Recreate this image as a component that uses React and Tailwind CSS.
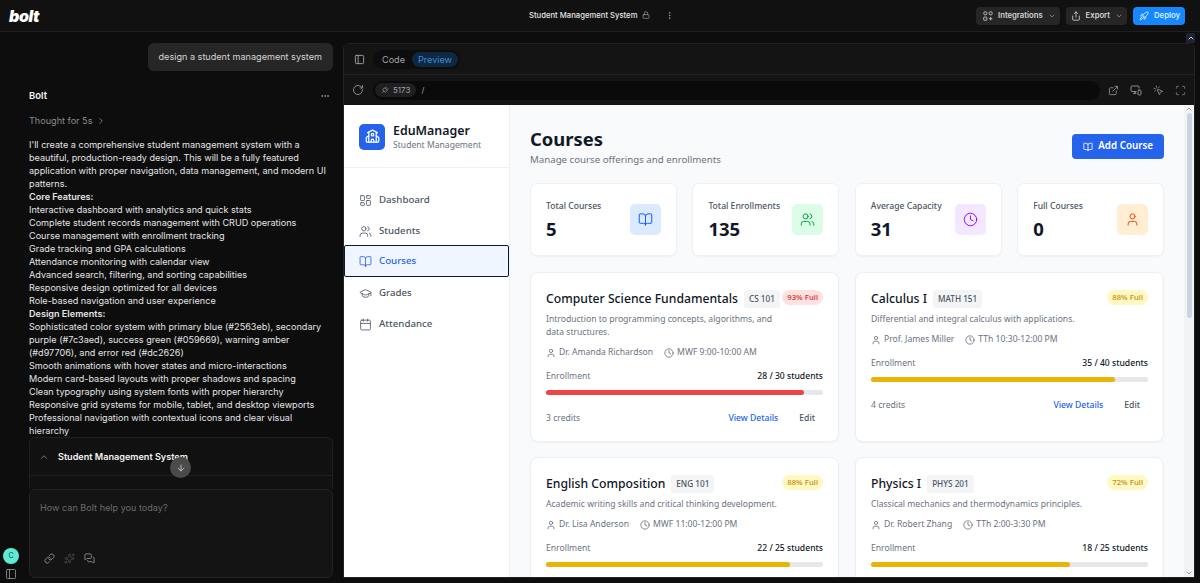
import {
  ArrowDown,
  BookOpen,
  Calendar,
  ChevronDown,
  ChevronRight,
  ChevronUp,
  Clock,
  Ellipsis,
  EllipsisVertical,
  ExternalLink,
  GraduationCap,
  LayoutDashboard,
  Link,
  Lock,
  MessagesSquare,
  MonitorSmartphone,
  MousePointerClick,
  PanelLeft,
  Plug,
  RotateCw,
  Rocket,
  Scan,
  School,
  Share,
  Sparkles,
  User,
  Users,
} from "lucide-react";

const chatLines = [
  "Interactive dashboard with analytics and quick stats",
  "Complete student records management with CRUD operations",
  "Course management with enrollment tracking",
  "Grade tracking and GPA calculations",
  "Attendance monitoring with calendar view",
  "Advanced search, filtering, and sorting capabilities",
  "Responsive design optimized for all devices",
  "Role-based navigation and user experience",
];

const designLines = [
  "Sophisticated color system with primary blue (#2563eb), secondary purple (#7c3aed), success green (#059669), warning amber (#d97706), and error red (#dc2626)",
  "Smooth animations with hover states and micro-interactions",
  "Modern card-based layouts with proper shadows and spacing",
  "Clean typography using system fonts with proper hierarchy",
  "Responsive grid systems for mobile, tablet, and desktop viewports",
  "Professional navigation with contextual icons and clear visual hierarchy",
];

const navItems = [
  { label: "Dashboard", icon: LayoutDashboard },
  { label: "Students", icon: Users },
  { label: "Courses", icon: BookOpen, active: true },
  { label: "Grades", icon: GraduationCap },
  { label: "Attendance", icon: Calendar },
];

const stats = [
  { label: "Total Courses", value: "5", icon: BookOpen, box: "bg-blue-100", tint: "text-blue-600" },
  { label: "Total Enrollments", value: "135", icon: Users, box: "bg-green-100", tint: "text-green-600" },
  { label: "Average Capacity", value: "31", icon: Clock, box: "bg-purple-100", tint: "text-purple-600" },
  { label: "Full Courses", value: "0", icon: User, box: "bg-orange-100", tint: "text-orange-600" },
];

const courses = [
  {
    title: "Computer Science Fundamentals",
    code: "CS 101",
    pct: 93,
    desc: "Introduction to programming concepts, algorithms, and data structures.",
    teacher: "Dr. Amanda Richardson",
    time: "MWF 9:00-10:00 AM",
    count: "28 / 30 students",
    credits: "3 credits",
  },
  {
    title: "Calculus I",
    code: "MATH 151",
    pct: 88,
    desc: "Differential and integral calculus with applications.",
    teacher: "Prof. James Miller",
    time: "TTh 10:30-12:00 PM",
    count: "35 / 40 students",
    credits: "4 credits",
  },
  {
    title: "English Composition",
    code: "ENG 101",
    pct: 88,
    desc: "Academic writing skills and critical thinking development.",
    teacher: "Dr. Lisa Anderson",
    time: "MWF 11:00-12:00 PM",
    count: "22 / 25 students",
    credits: "3 credits",
  },
  {
    title: "Physics I",
    code: "PHYS 201",
    pct: 72,
    desc: "Classical mechanics and thermodynamics principles.",
    teacher: "Dr. Robert Zhang",
    time: "TTh 2:00-3:30 PM",
    count: "18 / 25 students",
    credits: "4 credits",
  },
];

const IntegrationsIcon = () => (
  <svg width="10" height="10" viewBox="0 0 14 14" fill="none" stroke="currentColor" strokeWidth="1.2">
    <rect x="1" y="1" width="4.5" height="4.5" rx="2.25" />
    <rect x="8.5" y="1" width="4.5" height="4.5" rx="2.25" />
    <rect x="1" y="8.5" width="4.5" height="4.5" rx="1" />
    <path d="M10.75 8.5v4.5M8.5 10.75H13" />
  </svg>
);

const CourseCard = ({ course }) => {
  const red = course.pct > 90;
  return (
    <div className="h-[170px] rounded-[8px] border border-[#eceff3] bg-white px-[15px] pt-[16px] shadow-[0_1px_2px_rgba(0,0,0,0.04)]">
      <div className="flex items-start justify-between">
        <div className="flex items-center gap-[6px]">
          <h3 className="text-[12.2px] leading-[20px] font-medium whitespace-nowrap text-[#111827]">{course.title}</h3>
          <span className="rounded-[3px] bg-[#f3f4f6] px-[5px] text-[8.2px] leading-[18px] font-medium whitespace-nowrap text-[#4b5563]">
            {course.code}
          </span>
        </div>
        <span
          className={`mt-[1px] rounded-full px-[5px] text-[7.8px] leading-[15px] font-medium whitespace-nowrap ${
            red ? "bg-[#fee2e2] text-[#dc2626]" : "bg-[#fef9c3] text-[#ca8a04]"
          }`}
        >
          {course.pct}% Full
        </span>
      </div>
      <p className="mt-[4px] max-w-[235px] text-[8.6px] leading-[13px] text-[#6b7280]">{course.desc}</p>
      <div className="mt-[7px] flex items-center gap-[11px] text-[8.6px] leading-[13px] text-[#6b7280]">
        <span className="flex items-center gap-[3px]">
          <User size={10} />
          {course.teacher}
        </span>
        <span className="flex items-center gap-[3px]">
          <Clock size={10} />
          {course.time}
        </span>
      </div>
      <div className="mt-[11px] flex justify-between text-[8.6px] leading-[13px]">
        <span className="text-[#6b7280]">Enrollment</span>
        <span className="font-medium text-[#111827]">{course.count}</span>
      </div>
      <div className="mt-[7px] h-[5px] rounded-full bg-[#e5e7eb]">
        <div
          className={`h-full rounded-full ${red ? "bg-[#ef4444]" : "bg-[#eab308]"}`}
          style={{ width: `${course.pct}%` }}
        />
      </div>
      <div className="mt-[17px] flex items-center justify-between text-[8.6px] leading-[13px]">
        <span className="text-[#6b7280]">{course.credits}</span>
        <div className="flex gap-[21px] pr-[8px] font-medium">
          <span className="text-[#2563eb]">View Details</span>
          <span className="text-[#4b5563]">Edit</span>
        </div>
      </div>
    </div>
  );
};

const ChatPanel = () => (
  <div className="flex w-[343px] shrink-0 overflow-hidden font-['Inter',sans-serif]">
    <div className="flex w-[29px] shrink-0 flex-col items-start justify-end gap-[4px] pb-[3px] pl-[3px]">
      <div className="flex size-4 items-center justify-center rounded-full bg-[#5eead4] text-[7px] text-[#134e4a]">C</div>
      <PanelLeft size={12} strokeWidth={1.5} className="ml-[2px] text-[#a1a1aa]" />
    </div>
    <div className="relative flex w-[304px] flex-col pb-[5px]">
      <div className="flex justify-end pt-[11px]">
        <div className="rounded-[6px] bg-[#262626] px-[11px] text-[9.1px] leading-[28px] text-[#d4d4d8]">
          design a student management system
        </div>
      </div>
      <div className="mt-[18px] flex items-center justify-between pr-[3px]">
        <span className="text-[9.5px] leading-[13px] font-semibold text-[#f4f4f5]">Bolt</span>
        <Ellipsis size={10} className="text-[#a1a1aa]" />
      </div>
      <div className="mt-[12px] flex items-center gap-[4px] text-[9.1px] leading-[13px] text-[#8b8b8b]">
        Thought for 5s <ChevronRight size={10} />
      </div>
      <div className="mt-[11px] pr-[5px] text-[9.1px] leading-[13px] text-[#e4e4e7]">
        <p>
          I'll create a comprehensive student management system with a beautiful, production-ready design. This will be a fully featured application with proper navigation, data management, and modern UI patterns.
        </p>
        <p className="font-semibold">Core Features:</p>
        {chatLines.map((line) => (
          <p key={line}>{line}</p>
        ))}
        <p className="font-semibold">Design Elements:</p>
        {designLines.map((line) => (
          <p key={line}>{line}</p>
        ))}
      </div>
      <div className="min-h-0 flex-1 rounded-t-[6px] border border-b-0 border-[#1f1f1f] bg-[#111111]">
        <div className="flex h-[38px] items-center gap-[9px] border-b border-[#1f1f1f] px-[9px] text-[9.1px] font-semibold text-[#f4f4f5]">
          <ChevronUp size={10} className="text-[#8b8b8b]" />
          Student Management System
        </div>
      </div>
      <div className="absolute top-[425px] left-[141px] flex size-[21px] items-center justify-center rounded-full bg-[#4b4b4b]">
        <ArrowDown size={10} className="text-[#d4d4d8]" />
      </div>
      <div className="flex h-[89px] shrink-0 flex-col justify-between rounded-[6px] border border-[#222222] bg-[#141414] px-[10px] pt-[11px] pb-[13px]">
        <span className="text-[9.1px] leading-[13px] text-[#6b6b6b]">How can Bolt help you today?</span>
        <div className="flex items-center gap-[9px] pl-[4px] text-[#8b8b8b]">
          <Link size={11} />
          <Sparkles size={11} className="text-[#4b4b4b]" />
          <MessagesSquare size={11} />
        </div>
      </div>
    </div>
  </div>
);

const PreviewChrome = () => (
  <>
    <div className="flex h-[31px] items-center gap-[8px] border-b border-[#222222] bg-[#141414] px-[10px] text-[9.1px]">
      <PanelLeft size={11} className="text-[#a1a1aa]" />
      <div className="flex items-center rounded-full bg-[#0d0d0d] p-[2px]">
        <span className="px-[7px] leading-[15px] text-[#a1a1aa]">Code</span>
        <span className="rounded-full bg-[#0f2740] px-[6px] leading-[15px] text-[#3b8fd9]">Preview</span>
      </div>
    </div>
    <div className="flex h-[30px] items-center bg-[#141414] pr-[8px] pl-[8px] text-[#8b8b8b]">
      <RotateCw size={12} />
      <div className="mr-[8px] ml-[9px] flex h-[19px] flex-1 items-center gap-[5px] rounded-full bg-[#0a0a0a] text-[8px]">
        <span className="ml-[2px] flex items-center gap-[4px] rounded-full bg-[#1f1f1f] px-[6px] leading-[14px] text-[#a1a1aa]">
          <Plug size={8} className="rotate-45" />
          5173
        </span>
        <span className="text-[#a1a1aa]">/</span>
      </div>
      <div className="flex items-center gap-[11px]">
        <ExternalLink size={11} />
        <MonitorSmartphone size={12} />
        <MousePointerClick size={11} />
        <Scan size={11} />
      </div>
    </div>
  </>
);

const AppSidebar = () => (
  <aside className="w-[166px] shrink-0 border-r border-[#eceff3] bg-white">
    <div className="flex h-[63px] items-center gap-[8px] border-b border-[#f0f1f4] pt-[1px] pl-[15px]">
      <div className="flex size-[26px] items-center justify-center rounded-[5px] bg-[#2563eb] text-white">
        <School size={15} />
      </div>
      <div>
        <div className="text-[12.4px] leading-[17px] font-semibold text-[#111827]">EduManager</div>
        <div className="text-[8.6px] leading-[12px] text-[#6b7280]">Student Management</div>
      </div>
    </div>
    <nav className="pt-[16px] pb-[4px]">
      {navItems.map((item) => {
        const Icon = item.icon;
        return (
          <div
            key={item.label}
            className={`flex items-center gap-[7px] pt-[1px] text-[9.7px] font-medium ${
              item.active
                ? "-mt-[1px] h-[32px] rounded-[2px] border border-[#111827] bg-[#eff6ff] pl-[14px] text-[#2563eb]"
                : "h-[31px] pl-[15px] text-[#4b5563]"
            }`}
          >
            <Icon size={13} strokeWidth={1.5} />
            {item.label}
          </div>
        );
      })}
    </nav>
  </aside>
);

const CoursesPage = () => (
  <main className="min-w-0 flex-1 overflow-hidden bg-[#f9fafb] px-[20px] pt-[20px]">
    <div className="flex items-start justify-between">
      <div>
        <h1 className="text-[18.4px] leading-[28px] font-bold text-[#111827]">Courses</h1>
        <p className="text-[9.7px] leading-[14px] text-[#6b7280]">Manage course offerings and enrollments</p>
      </div>
      <button className="mt-[9px] flex h-[25px] items-center gap-[5px] rounded-[4px] bg-[#2563eb] px-[11px] text-[9.8px] font-semibold text-white">
        <BookOpen size={10} />
        Add Course
      </button>
    </div>
    <div className="mt-[16px] grid grid-cols-4 gap-[15.5px]">
      {stats.map((stat) => {
        const Icon = stat.icon;
        return (
          <div
            key={stat.label}
            className="flex h-[73px] items-center justify-between rounded-[7px] border border-[#eff1f4] bg-white px-[15px] shadow-[0_1px_2px_rgba(0,0,0,0.04)]"
          >
            <div className="pt-[1px]">
              <div className="text-[8.6px] leading-[13px] font-medium text-[#4b5563]">{stat.label}</div>
              <div className="mt-[4px] text-[18.5px] leading-[24px] font-bold text-[#111827]">{stat.value}</div>
            </div>
            <div className={`flex size-[31px] items-center justify-center rounded-[5px] ${stat.box} ${stat.tint}`}>
              <Icon size={15} strokeWidth={1.6} />
            </div>
          </div>
        );
      })}
    </div>
    <div className="mt-[16px] grid grid-cols-2 gap-x-[16px] gap-y-[15px]">
      {courses.map((course) => (
        <CourseCard key={course.code} course={course} />
      ))}
    </div>
  </main>
);

export default function App() {
  return (
    <div className="relative flex h-[583px] w-[1200px] flex-col overflow-hidden bg-[#0d0d0d]">
      <header className="relative flex h-[32px] shrink-0 items-center justify-between border-b border-[#1f1f1f] bg-[#111111] pr-[15px] pl-[9px] font-['Inter',sans-serif]">
        <span className="text-[16px] leading-[16px] font-black tracking-tight text-white italic">bolt</span>
        <div className="absolute left-[529px] flex items-center gap-[5px] text-[7.7px] font-medium text-[#e4e4e7]">
          Student Management System
          <Lock size={8} className="text-[#a1a1aa]" />
          <EllipsisVertical size={9} className="ml-[10px] text-[#a1a1aa]" />
        </div>
        <div className="flex items-center gap-[6px] text-[7.7px] font-semibold">
          <div className="flex h-[18px] items-center gap-[5px] rounded-[4px] bg-[#262626] pr-[4px] pl-[7px] text-[#d4d4d8]">
            <IntegrationsIcon />
            Integrations
            <ChevronDown size={8} className="text-[#a1a1aa]" />
          </div>
          <div className="flex h-[18px] items-center gap-[5px] rounded-[4px] bg-[#262626] pr-[4px] pl-[5px] text-[#d4d4d8]">
            <Share size={10} />
            Export
            <ChevronDown size={8} className="text-[#a1a1aa]" />
          </div>
          <div className="flex h-[18px] items-center gap-[5px] rounded-[4px] bg-[#1488fc] pr-[5px] pl-[6px] text-[#d6ebff]">
            <Rocket size={10} />
            Deploy
          </div>
        </div>
      </header>
      <div className="flex min-h-0 flex-1">
        <ChatPanel />
        <section className="mt-[11px] mb-[5px] flex w-[852px] flex-col overflow-hidden rounded-t-[6px] border border-[#222222] font-['Inter',sans-serif]">
          <PreviewChrome />
          <div className="flex min-h-0 flex-1 font-['Noto_Sans',sans-serif]">
            <AppSidebar />
            <CoursesPage />
            <div className="flex w-[10px] shrink-0 flex-col items-center bg-[#f1f3f5]">
              <ChevronUp size={8} className="text-[#64748b]" />
              <div className="h-[205px] w-[5px] rounded-full bg-[#cbd5e1]" />
              <ChevronDown size={8} className="mt-auto text-[#64748b]" />
            </div>
          </div>
        </section>
      </div>
      <div className="absolute top-[33px] left-[1186px] flex h-[10px] w-[9px] items-center justify-center bg-[#1e2235] text-[#cbd5e1]">
        <ChevronUp size={8} strokeWidth={3} />
      </div>
    </div>
  );
}
